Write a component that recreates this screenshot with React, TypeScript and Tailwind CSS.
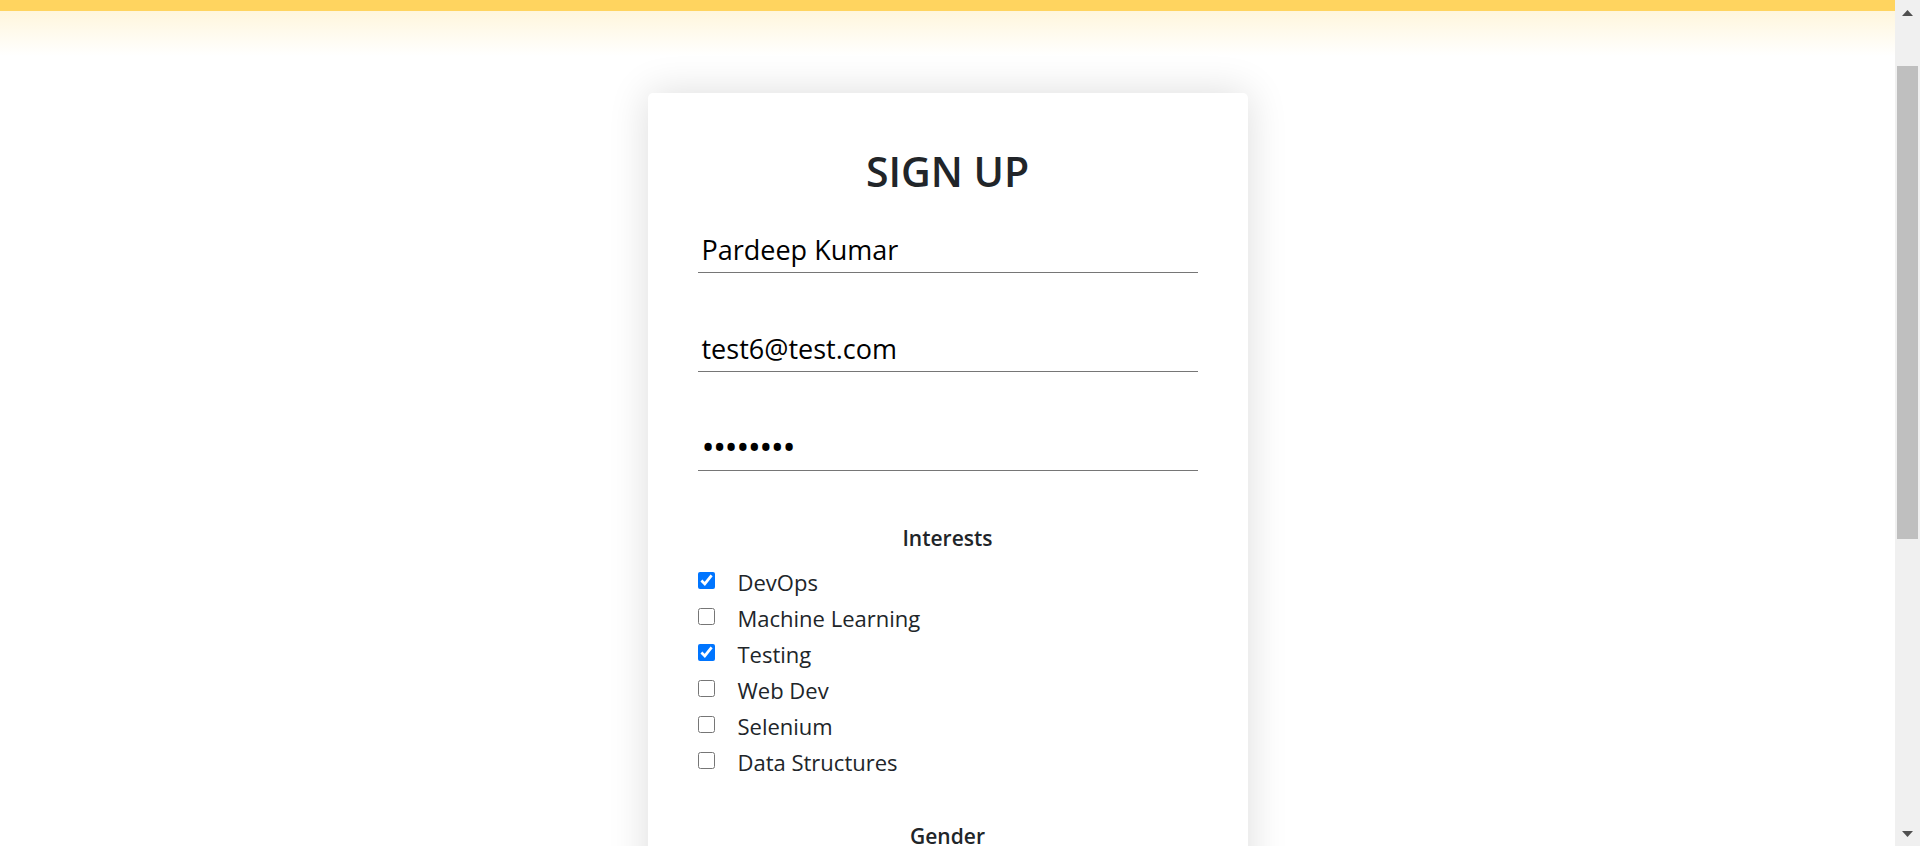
import React from "react";

const interests: { label: string; checked: boolean }[] = [
  { label: "DevOps", checked: true },
  { label: "Machine Learning", checked: false },
  { label: "Testing", checked: true },
  { label: "Web Dev", checked: false },
  { label: "Selenium", checked: false },
  { label: "Data Structures", checked: false },
];

function Field({ children }: { children: React.ReactNode }) {
  return (
    <div className="border-b border-[#767676] pb-[4px] pl-[4px] text-[27px] leading-[36px] text-black">
      {children}
    </div>
  );
}

export default function App() {
  return (
    <div className="flex h-[846px] w-full overflow-hidden bg-white font-['Open_Sans',sans-serif] text-[#212529]">
      <main className="flex min-w-0 flex-1 flex-col">
        <div className="h-[11px] shrink-0 bg-[#ffd45f]" />
        <div className="h-[45px] shrink-0 bg-linear-to-b from-[#fff6dc] to-white" />
        <section className="mx-auto mt-[37px] w-[600px] shrink-0 rounded-[5px] bg-white px-[50px] pt-[53px] pb-[60px] shadow-[0_0_40px_rgba(0,0,0,0.14)]">
          <h1 className="text-center text-[41px] font-semibold leading-[50px] text-[#212529]">SIGN UP</h1>

          <form className="mt-[36px] flex flex-col">
            <Field>Pardeep Kumar</Field>
            <div className="mt-[58px]">
              <Field>test6@test.com</Field>
            </div>
            <div className="mt-[58px]">
              <Field>
                <span className="align-[-2px] text-[35px] leading-[30px] tracking-[-1.6px]">••••••••</span>
              </Field>
            </div>

            <h2 className="mt-[53px] text-center text-[21px] font-semibold leading-[28px]">Interests</h2>
            <div className="mt-[12px] flex flex-col">
              {interests.map((it) => (
                <label key={it.label} className="flex h-[36px] items-start">
                  <input
                    type="checkbox"
                    defaultChecked={it.checked}
                    className="m-0 mt-[8px] h-[17px] w-[17px] shrink-0 accent-[#0075ff]"
                  />
                  <span className="ml-[23px] text-[22px] leading-[36px]">{it.label}</span>
                </label>
              ))}
            </div>

            <h2 className="mt-[42px] text-center text-[21px] font-semibold leading-[28px]">Gender</h2>
          </form>
        </section>
      </main>

      <aside className="flex w-[25px] shrink-0 flex-col bg-[#f0f0f0]">
        <div className="flex h-[25px] items-center justify-center">
          <svg width="11" height="6" viewBox="0 0 11 6">
            <path d="M5.5 0 L11 6 L0 6 Z" fill="#505050" />
          </svg>
        </div>
        <div className="mx-[2px] mt-[41px] h-[473px] bg-[#bfbfbf]" />
        <div className="flex-1" />
        <div className="flex h-[25px] items-center justify-center">
          <svg width="11" height="6" viewBox="0 0 11 6">
            <path d="M0 0 L11 0 L5.5 6 Z" fill="#505050" />
          </svg>
        </div>
      </aside>
    </div>
  );
}
